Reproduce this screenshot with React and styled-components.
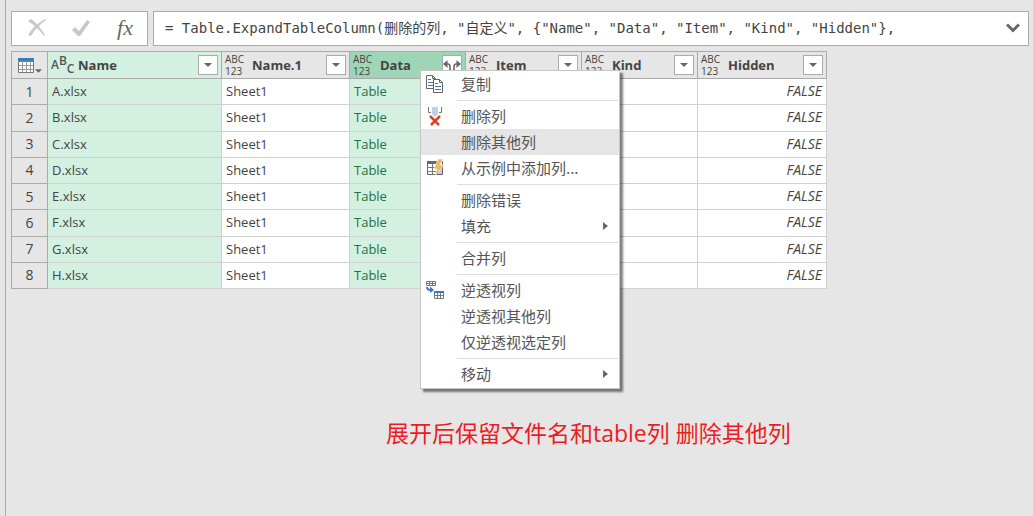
import React from "react";
import styled, { createGlobalStyle, css } from "styled-components";

const line = "#ababab";
const softLine = "#d0d0d0";
const ui = `"Open Sans", "Noto Sans CJK SC", sans-serif`;

const GlobalStyle = createGlobalStyle`
  * { box-sizing: border-box; }
  body { margin: 0; background: #e6e6e6; color: #444; font: 13px/18px ${ui}; }
  button, input { font: inherit; color: inherit; margin: 0; padding: 0; border: 0; background: none; }
  svg { display: block; }
`;

const Page = styled.div`
  min-height: 100vh;
  padding-left: 5px;
`;

const Panel = styled.main`
  min-height: 100vh;
  border-left: 1px solid ${line};
  padding: 11px 4px 0 5px;
`;

const Toolbar = styled.div`
  display: flex;
  gap: 5px;
  margin-bottom: 5px;
`;

const Box = styled.div`
  display: flex;
  align-items: center;
  height: 35px;
  background: #fff;
  border: 1px solid ${line};
`;

const ActionBox = styled(Box)`
  flex: 0 0 137px;
  justify-content: space-between;
  padding: 0 12px 2px 15px;
`;

const FormulaBox = styled(Box)`
  flex: 1;
  min-width: 0;
  padding: 0 5px 2px 11px;
`;

const ToolButton = styled.button`
  width: 20px;
  height: 28px;
  display: flex;
  align-items: center;
  justify-content: center;
`;

const FxButton = styled(ToolButton)`
  font: italic 22px/28px "Liberation Serif", serif;
  color: #666;
`;

const FormulaInput = styled.input`
  flex: 1;
  min-width: 0;
  height: 20px;
  font: 14px/20px "DejaVu Sans Mono", "Noto Sans CJK SC", monospace;
  outline: none;
`;

const GridArea = styled.section`
  position: relative;
`;

const Grid = styled.table`
  table-layout: fixed;
  width: 816px;
  height: 238px;
  border-collapse: separate;
  border-spacing: 0;
  border-top: 1px solid ${line};
  border-left: 1px solid ${line};
`;

const Col = styled.col`
  width: ${(p) => p.$width}px;
`;

const HeadCell = styled.th`
  height: 27px;
  padding: 0 3px;
  text-align: left;
  font-weight: 700;
  background: ${(p) => (p.$tone === "active" ? "#9fd5b7" : p.$tone === "selected" ? "#d3f0e0" : "#e6e6e6")};
  border-right: 1px solid ${line};
  border-bottom: 1px solid ${line};
`;

const HeadRow = styled.div`
  display: flex;
  align-items: center;
  gap: 8px;
`;

const HeadName = styled.span`
  flex: 1;
`;

const AnyType = styled.span`
  display: flex;
  flex-direction: column;
  width: 19px;
  font-size: 10px;
  line-height: 12px;
  font-weight: 400;
`;

const TextType = styled.span`
  display: flex;
  width: 19px;
  font-size: 12px;
  line-height: 14px;
  font-weight: 600;
  color: #555;
`;

const Letter = styled.span`
  flex: 1;
  padding-top: ${(p) => p.$drop}px;
  height: 22px;
`;

const HeadButton = styled.button`
  width: 20px;
  height: 20px;
  display: flex;
  align-items: center;
  justify-content: center;
  background: #fff;
  border: 1px solid ${line};
`;

const CornerButton = styled.button`
  display: flex;
  align-items: flex-end;
  gap: 1px;
  margin: 0 auto;
`;

const RowHead = styled.th`
  padding: 0;
  text-align: center;
  font-weight: 400;
  font-size: 14px;
  background: #e6e6e6;
  border-right: 1px solid ${line};
  border-bottom: 1px solid ${line};
`;

const Cell = styled.td`
  padding: 0 4px 1px;
  background: #fff;
  border-right: 1px solid ${softLine};
  border-bottom: 1px solid ${softLine};
  ${(p) => p.$selected && css`background: #d3f0e0;`}
  ${(p) => p.$link && css`color: #217346;`}
  ${(p) => p.$logical && css`text-align: right; font-style: italic; font-size: 14px;`}
`;

const Menu = styled.div`
  position: absolute;
  left: 409px;
  top: 19px;
  width: 200px;
  padding-bottom: 1px;
  background: #fff;
  border: 1px solid #c6c6c6;
  box-shadow: 3px 3px 2px rgba(0, 0, 0, 0.5);
`;

const MenuButton = styled.button`
  display: flex;
  align-items: center;
  width: 100%;
  height: 26px;
  padding: 0 11px 0 5px;
  text-align: left;
  font: 15px/22px "Noto Sans CJK SC", sans-serif;
  color: #555;
  background: ${(p) => (p.$hover ? "#e5e5e5" : "transparent")};
`;

const MenuIcon = styled.span`
  width: 18px;
  height: 20px;
  margin-right: 17px;
`;

const MenuLabel = styled.span`
  flex: 1;
`;

const Separator = styled.hr`
  height: 1px;
  margin: 3px 1px 2px 36px;
  border: 0;
  background: #dcdcdc;
`;

const Note = styled.p`
  margin: 128px 0 0 375px;
  font: 23px/32px "Open Sans", "Noto Sans CJK SC", sans-serif;
  color: #ed1c24;
`;

const CancelIcon = () => (
  <svg width="20" height="20" viewBox="0 0 20 20">
    <path d="M1 3l3-2c5 3 9 8 14 16l-1 1C13 12 7 7 1 3z" fill="#c8c8c8" />
    <path d="M18 1l1 1C13 6 8 11 4 18l-3-1C5 10 11 5 18 1z" fill="#c8c8c8" />
  </svg>
);

const AcceptIcon = () => (
  <svg width="20" height="20" viewBox="0 0 20 20">
    <path d="M1 12l3-3 4 4L16 2l3 2L9 18H7z" fill="#c8c8c8" />
  </svg>
);

const ExpandIcon = () => (
  <svg width="14" height="10" viewBox="0 0 14 10">
    <path d="M1 1.5l6 6 6-6" fill="none" stroke="#666" strokeWidth="3" />
  </svg>
);

const DownIcon = ({ size = 8 }) => (
  <svg width={size} height="4" viewBox="0 0 8 4">
    <path d="M0 0h8L4 4z" fill="#666" />
  </svg>
);

const SplitIcon = () => (
  <svg width="18" height="14" viewBox="0 0 18 14">
    <path d="M4.500 2v8L0 6zM13.500 2v8L18 6z" fill="#666" />
    <path d="M4 6h1q2 0 2 3v4M14 6h-1q-2 0-2 3v4" fill="none" stroke="#666" strokeWidth="1.600" />
  </svg>
);

const TableIcon = () => (
  <svg width="16" height="15" viewBox="0 0 16 15">
    <path d="M.5 3.5h15v11H.5z" fill="#fff" stroke="#777" />
    <path d="M0 0h16v3H0z" fill="#3e7ab5" />
    <path d="M1 7.5h14M1 11.5h14M4.5 3v11M8.5 3v11M12.5 3v11" stroke="#999" />
  </svg>
);

const SubmenuIcon = () => (
  <svg width="5" height="8" viewBox="0 0 5 8">
    <path d="M0 0l5 4-5 4z" fill="#666" />
  </svg>
);

const CopyIcon = () => (
  <svg width="18" height="20" viewBox="0 0 18 20">
    <path d="M.5 1.5h6l3 3v10h-9z" fill="#fff" stroke="#666" />
    <path d="M6.500 1.500v3h3" fill="none" stroke="#666" />
    <path d="M2 5.500h3M2 8.500h5M2 11.500h5" stroke="#3e7ab5" />
    <path d="M7.500 5.500h6l3 3v10h-9z" fill="#fff" stroke="#666" />
    <path d="M13.500 5.500v3h3" fill="none" stroke="#666" />
    <path d="M9 9.500h3M9 12.500h6M9 15.500h6" stroke="#3e7ab5" />
  </svg>
);

const RemoveIcon = () => (
  <svg width="18" height="20" viewBox="0 0 18 20">
    <path d="M2.500 1v5.500H5M15.500 1v5.500H13" fill="none" stroke="#777" />
    <path d="M6 1h6v7l-3 3-3-3z" fill="#bdd0e6" />
    <path d="M4 10l9 9M14 10l-9 9" stroke="#d24726" strokeWidth="2.500" />
  </svg>
);

const ExampleIcon = () => (
  <svg width="18" height="20" viewBox="0 0 18 20">
    <path d="M1.500 3.500h15v13h-15z" fill="#fff" stroke="#666" />
    <path d="M1 3h10v3H1z" fill="#666" />
    <path d="M12 8h4v8h-4z" fill="#bdd0e6" />
    <path d="M1 9.500h10M1 13.500h10M6.500 6v10M11.500 6v10" stroke="#777" />
    <path d="M12 1h5l-3 6h4L9 18l2-7H8z" fill="#e9b969" stroke="#fff" strokeWidth=".5" />
  </svg>
);

const UnpivotIcon = () => (
  <svg width="18" height="20" viewBox="0 0 18 20">
    <path d="M.5 1.500h9v4h-9zM0 3.500h10M3.500 1v5M6.500 1v5" fill="none" stroke="#777" />
    <path d="M1 7c0 3 2 3 4 3" fill="none" stroke="#3e7ab5" strokeWidth="2" />
    <path d="M4 6.500L8 10l-4 3z" fill="#3e7ab5" />
    <path d="M8.500 12.500h9v6h-9zM8 15.500h10M11.500 13v6M14.500 13v6" fill="#fff" stroke="#777" />
    <path d="M8 11h10v2H8z" fill="#3e7ab5" />
  </svg>
);

const columns = [
  { name: "Name", width: 174, tone: "selected", text: true },
  { name: "Name.1", width: 128 },
  { name: "Data", width: 116, tone: "active", split: true },
  { name: "Item", width: 116 },
  { name: "Kind", width: 116 },
  { name: "Hidden", width: 129 },
];

const files = ["A", "B", "C", "D", "E", "F", "G", "H"];

const menu = [
  [{ label: "复制", icon: CopyIcon }],
  [
    { label: "删除列", icon: RemoveIcon },
    { label: "删除其他列", hover: true },
    { label: "从示例中添加列...", icon: ExampleIcon },
  ],
  [{ label: "删除错误" }, { label: "填充", sub: true }],
  [{ label: "合并列" }],
  [{ label: "逆透视列", icon: UnpivotIcon }, { label: "逆透视其他列" }, { label: "仅逆透视选定列" }],
  [{ label: "移动", sub: true }],
];

const formula =
  '= Table.ExpandTableColumn(删除的列, "自定义", {"Name", "Data", "Item", "Kind", "Hidden"},';

function ColumnHeader({ column }) {
  return (
    <HeadCell scope="col" $tone={column.tone}>
      <HeadRow>
        {column.text ? (
          <TextType>
            <Letter $drop={4}>A</Letter>
            <Letter $drop={0}>B</Letter>
            <Letter $drop={8}>C</Letter>
          </TextType>
        ) : (
          <AnyType>
            <span>ABC</span>
            <span>123</span>
          </AnyType>
        )}
        <HeadName>{column.name}</HeadName>
        <HeadButton type="button" aria-label={column.name}>
          {column.split ? <SplitIcon /> : <DownIcon />}
        </HeadButton>
      </HeadRow>
    </HeadCell>
  );
}

function ContextMenu() {
  return (
    <Menu role="menu">
      {menu.map((group, i) => (
        <React.Fragment key={i}>
          {i > 0 && <Separator />}
          {group.map(({ label, icon: Icon, hover, sub }) => (
            <MenuButton key={label} type="button" role="menuitem" $hover={hover}>
              <MenuIcon>{Icon && <Icon />}</MenuIcon>
              <MenuLabel>{label}</MenuLabel>
              {sub && <SubmenuIcon />}
            </MenuButton>
          ))}
        </React.Fragment>
      ))}
    </Menu>
  );
}

export default function App() {
  return (
    <Page>
      <GlobalStyle />
      <Panel>
        <Toolbar>
          <ActionBox>
            <ToolButton type="button" aria-label="取消"><CancelIcon /></ToolButton>
            <ToolButton type="button" aria-label="确认"><AcceptIcon /></ToolButton>
            <FxButton type="button">fx</FxButton>
          </ActionBox>
          <FormulaBox>
            <FormulaInput aria-label="公式" defaultValue={formula} spellCheck={false} />
            <ToolButton type="button" aria-label="展开"><ExpandIcon /></ToolButton>
          </FormulaBox>
        </Toolbar>
        <GridArea>
          <Grid>
            <colgroup>
              <Col $width={36} />
              {columns.map((c) => <Col key={c.name} $width={c.width} />)}
            </colgroup>
            <thead>
              <tr>
                <HeadCell>
                  <HeadRow>
                    <CornerButton type="button" aria-label="表">
                      <TableIcon />
                      <DownIcon size={7} />
                    </CornerButton>
                  </HeadRow>
                </HeadCell>
                {columns.map((c) => <ColumnHeader key={c.name} column={c} />)}
              </tr>
            </thead>
            <tbody>
              {files.map((file, i) => (
                <tr key={file}>
                  <RowHead scope="row">{i + 1}</RowHead>
                  <Cell $selected>{file}.xlsx</Cell>
                  <Cell>Sheet1</Cell>
                  <Cell $selected $link>Table</Cell>
                  <Cell />
                  <Cell />
                  <Cell $logical>FALSE</Cell>
                </tr>
              ))}
            </tbody>
          </Grid>
          <ContextMenu />
        </GridArea>
        <Note>展开后保留文件名和table列 删除其他列</Note>
      </Panel>
    </Page>
  );
}
